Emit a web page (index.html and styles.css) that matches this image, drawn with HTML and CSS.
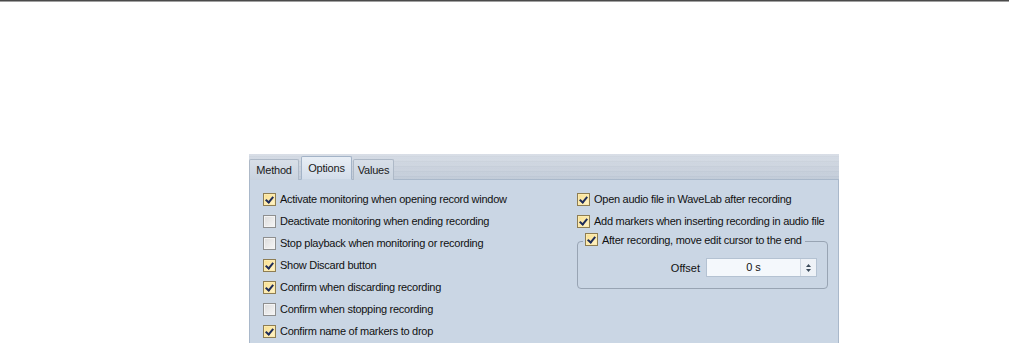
FILE: index.html
```html
<!DOCTYPE html>
<html>
<head>
<meta charset="utf-8">
<link rel="stylesheet" href="styles.css">
</head>
<body>
<div class="topline"></div>
<div class="panel">
  <div class="tabbar">
    <div class="tab t-method">Method</div>
    <div class="tab active t-options">Options</div>
    <div class="tab t-values">Values</div>
  </div>
  <div class="content">
    <div class="col">
      <label class="row"><span class="cb on"></span>Activate monitoring when opening record window</label>
      <label class="row"><span class="cb"></span>Deactivate monitoring when ending recording</label>
      <label class="row"><span class="cb"></span>Stop playback when monitoring or recording</label>
      <label class="row"><span class="cb on"></span>Show Discard button</label>
      <label class="row"><span class="cb on"></span>Confirm when discarding recording</label>
      <label class="row"><span class="cb"></span>Confirm when stopping recording</label>
      <label class="row"><span class="cb on"></span>Confirm name of markers to drop</label>
    </div>
    <div class="col right">
      <label class="row"><span class="cb on"></span>Open audio file in WaveLab after recording</label>
      <label class="row"><span class="cb on"></span>Add markers when inserting recording in audio file</label>
      <div class="group">
        <label class="legend"><span class="cb on"></span>After recording, move edit cursor to the end</label>
        <div class="offset">
          <span class="olabel">Offset</span>
          <div class="spin">
            <span class="val">0 s</span>
            <span class="arrows">
              <svg width="9" height="14" viewBox="0 0 9 14"><path d="M2 6 L4.5 3 L7 6 Z" fill="#3a4a5a"/><path d="M2 8 L4.5 11 L7 8 Z" fill="#3a4a5a"/></svg>
            </span>
          </div>
        </div>
      </div>
    </div>
  </div>
</div>
</body>
</html>
```
FILE: styles.css
```css
html, body {
  margin: 0;
  padding: 0;
  background: #ffffff;
  font-family: "Liberation Sans", Arial, sans-serif;
}
.topline {
  height: 1px;
  background: #4a4a4a;
  border-bottom: 1px solid #a0a0a0;
}
.panel {
  margin: 152px 0 0 249px;
  width: 590px;
  height: 189px;
  background: #cad6e4;
  display: flex;
  flex-direction: column;
}
.tabbar {
  height: 25px;
  display: flex;
  align-items: flex-end;
  background:
    repeating-linear-gradient(180deg, rgba(255,255,255,0.07) 0 2px, rgba(0,0,0,0.015) 2px 3px, rgba(255,255,255,0.03) 3px 5px),
    linear-gradient(180deg, #d6dce5 0%, #cad2dd 50%, #c0cad7 100%);
  border-bottom: 1px solid #a9b8ca;
}
.tab {
  height: 21px;
  box-sizing: border-box;
  font-size: 11px;
  letter-spacing: -0.2px;
  line-height: 21px;
  text-align: center;
  color: #1a1a1a;
  background: linear-gradient(180deg, #d8dfe8 0%, #c9d3df 100%);
  border: 1px solid #aeb9c7;
  border-bottom: none;
  border-radius: 2px 2px 0 0;
  margin-bottom: -1px;
}
.t-method { width: 50px; margin-right: 2px; }
.t-options { width: 51px; margin-right: 1px; }
.t-values { width: 41px; }
.tab.active {
  height: 24px;
  line-height: 22px;
  background: linear-gradient(180deg, #e8eef5 0%, #d3ddea 100%);
  border-color: #a3b3c7;
  border-bottom: 1px solid #cad6e4;
  position: relative;
  z-index: 1;
}
.content {
  flex: 1;
  display: grid;
  grid-template-columns: 314px 262px;
  padding: 8px 0 0 13px;
  border-left: 1px solid #a9b8ca;
  border-right: 1px solid #a9b8ca;
}
.col {
  display: flex;
  flex-direction: column;
}
.row {
  height: 22px;
  display: flex;
  align-items: center;
  font-size: 11px;
  letter-spacing: -0.27px;
  color: #111;
  white-space: nowrap;
}
.cb {
  width: 11px;
  height: 11px;
  border: 1px solid #8e8f8f;
  background: linear-gradient(135deg, #dcdcdc 0%, #f6f6f6 100%);
  margin-right: 4px;
  flex: none;
  position: relative;
  box-shadow: inset 0 0 0 1px #f4f4f4;
}
.cb.on {
  border-color: #8e7d52;
  background: linear-gradient(135deg, #f9df8c 0%, #fff4cc 100%);
  box-shadow: inset 0 0 0 1px #fcebb0;
}
.cb.on::after {
  content: "";
  position: absolute;
  left: 3px;
  top: 1px;
  width: 3px;
  height: 6px;
  border: solid #1e2c5a;
  border-width: 0 2px 2px 0;
  transform: rotate(40deg);
}
.group {
  margin-top: 9px;
  margin-right: 11px;
  border: 1px solid #98a4b3;
  border-radius: 4px;
  height: 46px;
  position: relative;
}
.legend {
  position: absolute;
  top: -9px;
  left: 5px;
  padding: 0 3px 0 2px;
  background: #cad6e4;
  display: flex;
  align-items: center;
  font-size: 11px;
  letter-spacing: -0.27px;
  color: #111;
  white-space: nowrap;
}
.offset {
  display: flex;
  align-items: center;
  justify-content: flex-end;
  padding: 16px 10px 0 0;
}
.olabel {
  font-size: 11px;
  color: #111;
  margin-right: 6px;
}
.spin {
  width: 111px;
  height: 19px;
  box-sizing: border-box;
  border: 1px solid #b4c2d2;
  background: #f4f8fc;
  display: flex;
}
.val {
  flex: 1;
  text-align: center;
  font-size: 11px;
  line-height: 17px;
  color: #111;
}
.arrows {
  width: 15px;
  border-left: 1px solid #d0d8e2;
  background: #eef2f7;
  display: flex;
  align-items: center;
  justify-content: center;
}
```
